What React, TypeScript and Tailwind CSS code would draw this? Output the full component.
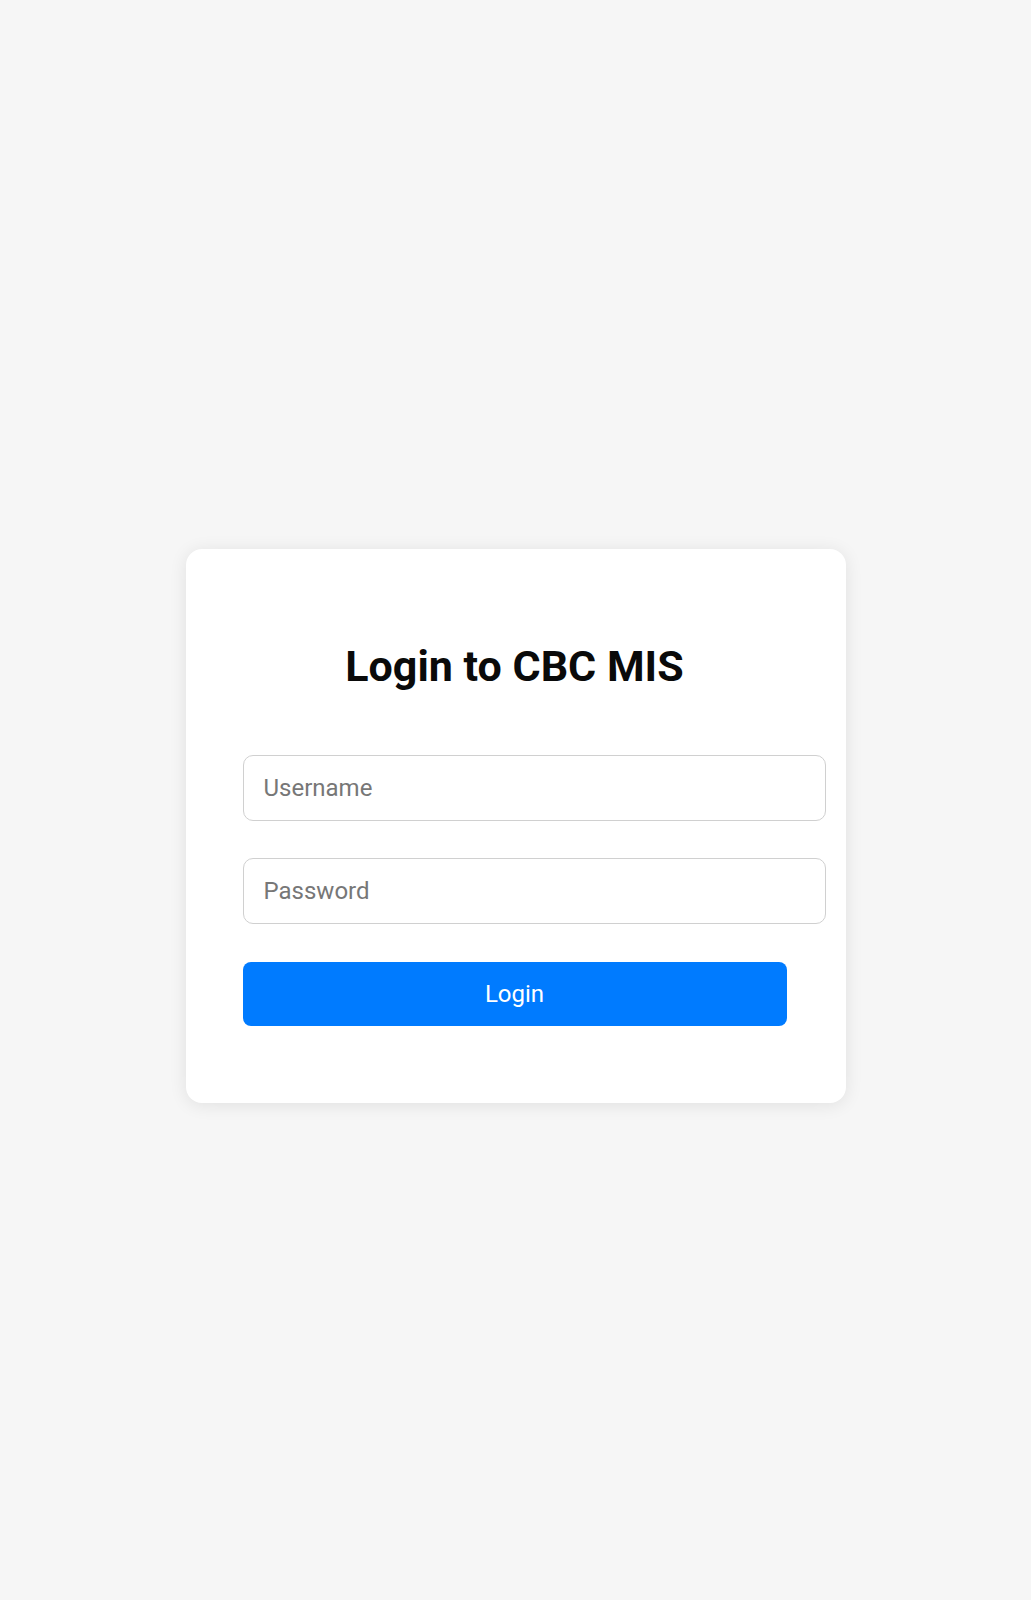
import React from 'react';

export default function App() {
  return (
    <div
      className="min-h-[1600px] w-full bg-[#f6f6f6] flex justify-center pt-[549px]"
      style={{ fontFamily: 'Roboto, "Noto Sans", sans-serif' }}
    >
      <form
        className="w-[660px] h-[554px] bg-white rounded-[16px] shadow-[0_2px_18px_rgba(0,0,0,0.09)] pl-[57px] pr-[59px] pt-[92px]"
        onSubmit={(e) => e.preventDefault()}
      >
        <h2 className="text-center text-[43px] leading-[51px] font-bold text-[#0a0a0a] mb-[63px]">
          Login to CBC MIS
        </h2>
        <input
          type="text"
          placeholder="Username"
          className="block w-[583px] h-[66px] border-[1.5px] border-[#d0d0d0] rounded-[10px] px-[20px] text-[24px] text-[#333] placeholder:text-[#777] outline-none"
        />
        <input
          type="password"
          placeholder="Password"
          className="block w-[583px] h-[66px] mt-[37px] border-[1.5px] border-[#d0d0d0] rounded-[10px] px-[20px] text-[24px] text-[#333] placeholder:text-[#777] outline-none"
        />
        <button
          type="submit"
          className="block w-full h-[64px] mt-[38px] bg-[#007bff] rounded-[8px] text-white text-[24px]"
        >
          Login
        </button>
      </form>
    </div>
  );
}
